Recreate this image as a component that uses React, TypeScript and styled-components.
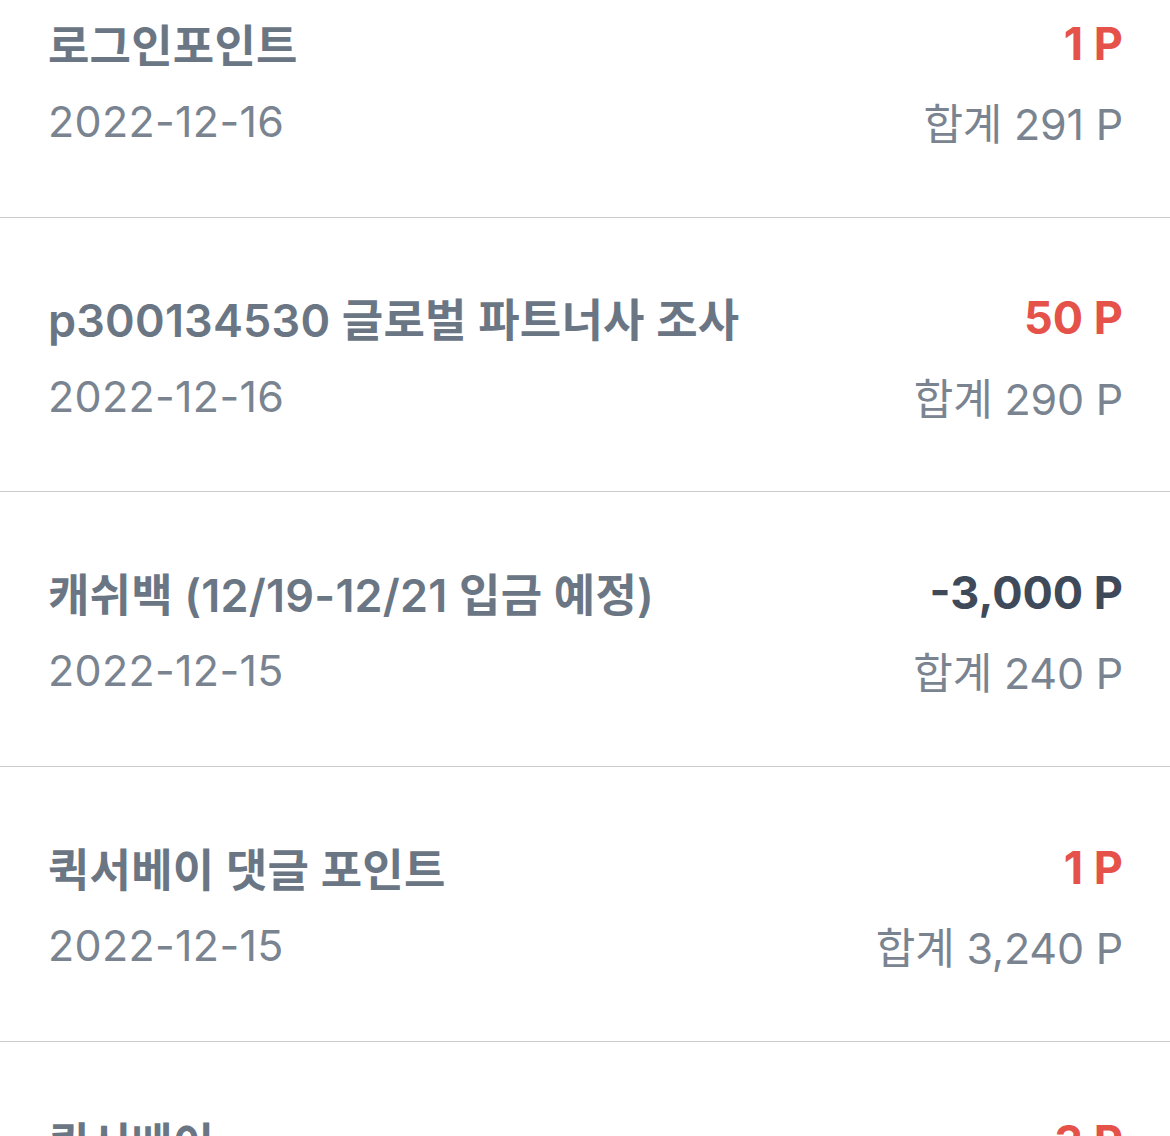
import React from "react";
import styled, { createGlobalStyle } from "styled-components";

const Global = createGlobalStyle`
  html, body { margin: 0; padding: 0; background: #ffffff; overflow: hidden; }
  body { font-family: Inter, "Noto Sans CJK KR", sans-serif; }
`;

const List = styled.div`
  margin-top: -57px;
  display: flex;
  flex-direction: column;
`;

const Row = styled.div`
  box-sizing: border-box;
  height: 274.7px;
  border-bottom: 1.5px solid #cbcbce;
  padding: 75px 47px 0 48px;
  display: grid;
  grid-template-columns: 1fr auto;
  grid-template-rows: 50px 50px;
  row-gap: 28px;
  align-items: center;
`;

const Title = styled.div`
  font-size: 45px;
  font-weight: 600;
  color: #6b7684;
  white-space: nowrap;
  letter-spacing: 0.2px;
`;

const Amount = styled.div<{ $negative?: boolean }>`
  font-size: 45px;
  font-weight: 700;
  color: ${(p) => (p.$negative ? "#3e4a59" : "#e5524a")};
  text-align: right;
  white-space: nowrap;
`;

const DateText = styled.div`
  font-size: 43px;
  font-weight: 400;
  color: #7a8491;
  white-space: nowrap;
  letter-spacing: 0.3px;
`;

const Total = styled.div`
  font-size: 43px;
  font-weight: 400;
  color: #7a8491;
  text-align: right;
  white-space: nowrap;
  letter-spacing: -0.2px;
`;

type Item = { title: string; amount: string; negative?: boolean; date: string; total: string };

const items: Item[] = [
  { title: "로그인포인트", amount: "1 P", date: "2022-12-16", total: "합계 291 P" },
  { title: "p300134530 글로벌 파트너사 조사", amount: "50 P", date: "2022-12-16", total: "합계 290 P" },
  { title: "캐쉬백 (12/19-12/21 입금 예정)", amount: "-3,000 P", negative: true, date: "2022-12-15", total: "합계 240 P" },
  { title: "퀵서베이 댓글 포인트", amount: "1 P", date: "2022-12-15", total: "합계 3,240 P" },
  { title: "퀵서베이", amount: "3 P", date: "2022-12-15", total: "합계 3,239 P" },
];

export default function App() {
  return (
    <>
      <Global />
      <List>
        {items.map((it, i) => (
          <Row key={i}>
            <Title>{it.title}</Title>
            <Amount $negative={it.negative}>{it.amount}</Amount>
            <DateText>{it.date}</DateText>
            <Total>{it.total}</Total>
          </Row>
        ))}
      </List>
    </>
  );
}
